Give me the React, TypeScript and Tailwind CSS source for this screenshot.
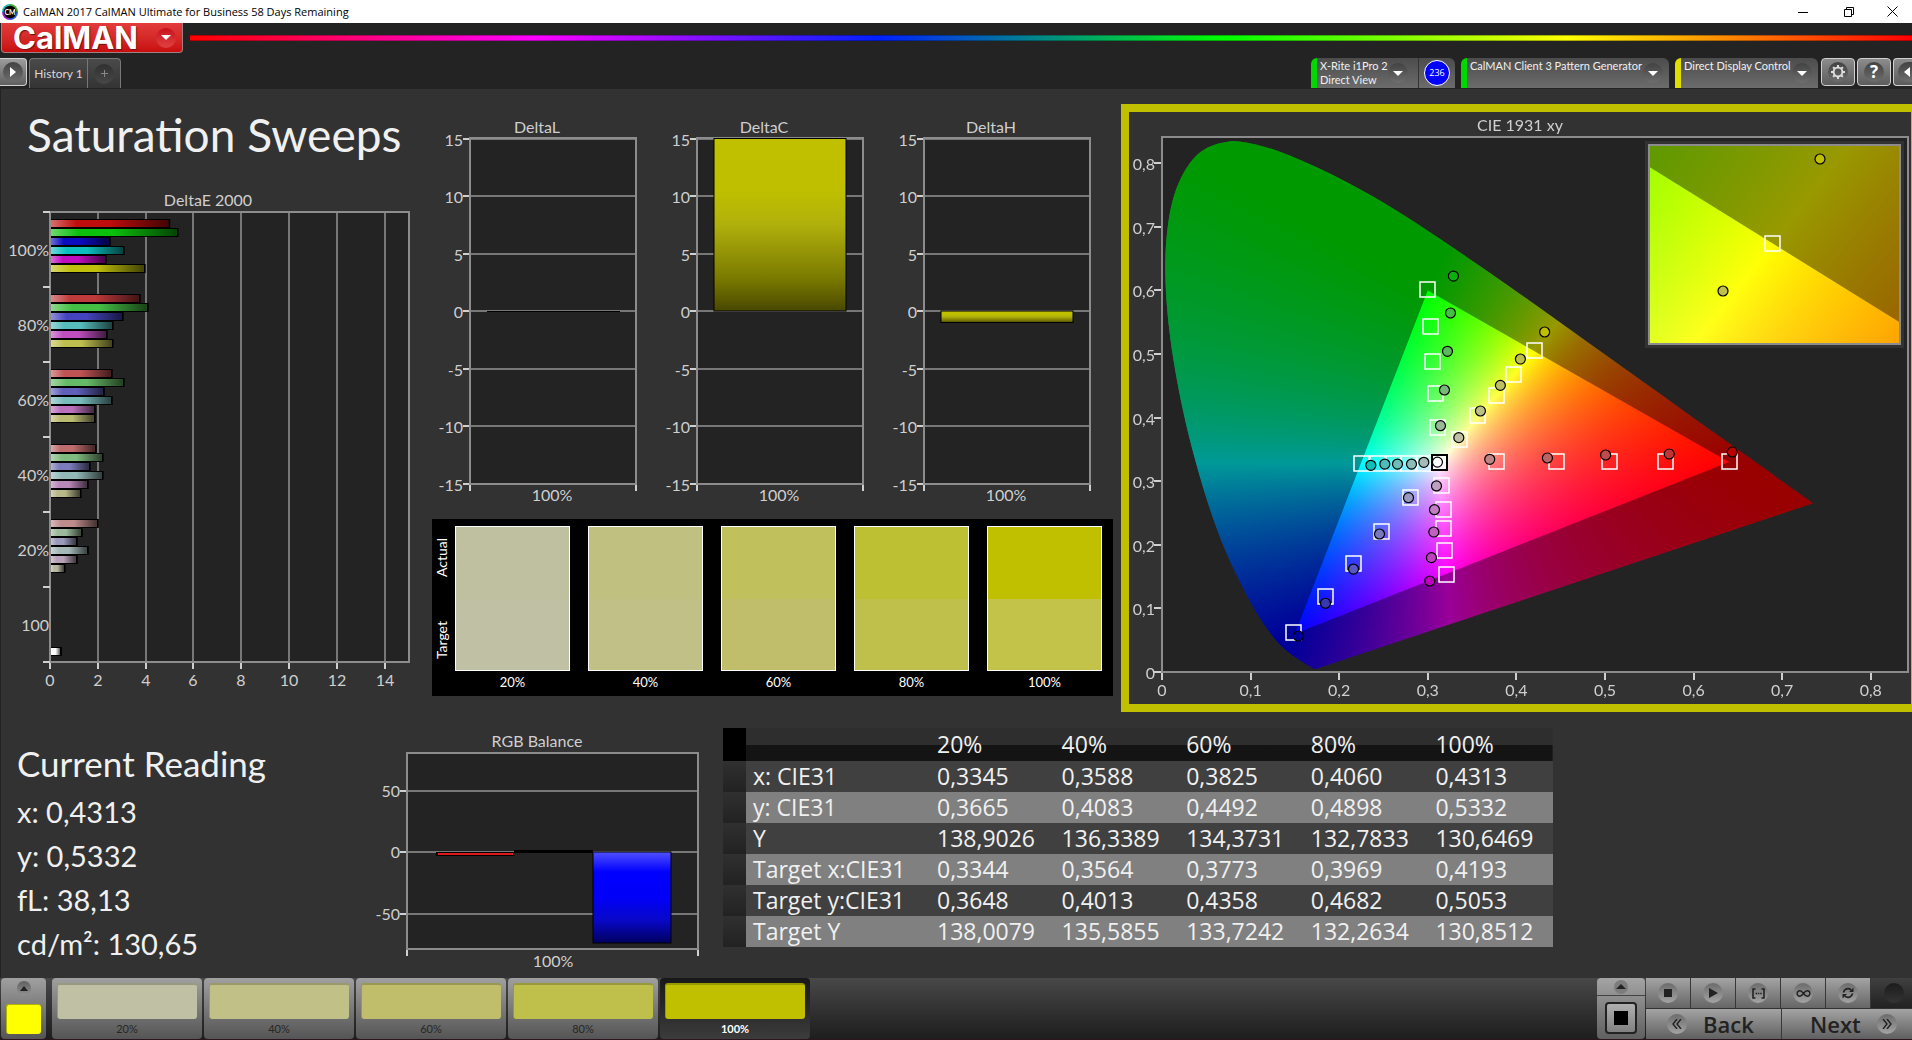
import React, { useEffect, useRef } from "react";

const GRID = "#8c8c8c";
const LABEL = "#cfcfcf";
const LEVELS = ["20%", "40%", "60%", "80%", "100%"];

/* ---------- data ---------- */

const deltaE = [
  {
    label: "100%",
    values: [4.99, 5.34, 2.5, 3.08, 2.33, 3.96],
    colors: ["#bf0c0c", "#0cbf0c", "#0c0cbf", "#0cbfbf", "#bf0cbf", "#bfbf0c"],
  },
  {
    label: "80%",
    values: [3.75, 4.09, 3.04, 2.62, 2.37, 2.62],
    colors: ["#bf3a3a", "#44bf44", "#4444bf", "#55bbbb", "#bf4fbf", "#bfbf50"],
  },
  {
    label: "60%",
    values: [2.58, 3.08, 2.25, 2.58, 1.87, 1.87],
    colors: ["#bf5353", "#66bb66", "#6060bb", "#77bbbb", "#bb70bb", "#bbbb70"],
  },
  {
    label: "40%",
    values: [1.91, 2.2, 1.66, 2.2, 1.58, 1.28],
    colors: ["#bf6c6c", "#80bb80", "#7c7cbb", "#92b8b8", "#b888b8", "#b8b888"],
  },
  {
    label: "20%",
    values: [2.0, 1.33, 1.12, 1.58, 1.12, 0.61],
    colors: ["#bf8c8c", "#9cbb9c", "#9a9abb", "#a5b8b8", "#b8a2b8", "#b8b8a2"],
  },
];

const swatches = [
  { label: "20%", actual: "#bfc09f", target: "#c0c0a4" },
  { label: "40%", actual: "#c0c080", target: "#c1c087" },
  { label: "60%", actual: "#c0c05c", target: "#c0be6a" },
  { label: "80%", actual: "#bec033", target: "#bfc04b" },
  { label: "100%", actual: "#c0c000", target: "#c3c34a" },
];

const steps = [
  { label: "20%", color: "#c0c0a4" },
  { label: "40%", color: "#c1c087" },
  { label: "60%", color: "#c0be6a" },
  { label: "80%", color: "#bfc04b" },
  { label: "100%", color: "#c0c000" },
];

const rows = [
  { name: "x: CIE31", values: ["0,3345", "0,3588", "0,3825", "0,4060", "0,4313"] },
  { name: "y: CIE31", values: ["0,3665", "0,4083", "0,4492", "0,4898", "0,5332"] },
  { name: "Y", values: ["138,9026", "136,3389", "134,3731", "132,7833", "130,6469"] },
  { name: "Target x:CIE31", values: ["0,3344", "0,3564", "0,3773", "0,3969", "0,4193"] },
  { name: "Target y:CIE31", values: ["0,3648", "0,4013", "0,4358", "0,4682", "0,5053"] },
  { name: "Target Y", values: ["138,0079", "135,5855", "133,7242", "132,2634", "130,8512"] },
];

type Point = [number, number];

// spectral locus, CIE 1931 2 degree observer
const locus: Point[] = [
  [0.1741, 0.005], [0.1714, 0.0051], [0.1644, 0.0109], [0.1566, 0.0177],
  [0.144, 0.0297], [0.1355, 0.0399], [0.1241, 0.0578], [0.1096, 0.0868],
  [0.0913, 0.1327], [0.0687, 0.2007], [0.0454, 0.295], [0.0235, 0.4127],
  [0.0082, 0.5384], [0.0039, 0.6548], [0.0139, 0.7502], [0.0389, 0.812],
  [0.0743, 0.8338], [0.1142, 0.8262], [0.1547, 0.8059], [0.1929, 0.7816],
  [0.2296, 0.7543], [0.2658, 0.7243], [0.3016, 0.6923], [0.3373, 0.6589],
  [0.3731, 0.6245], [0.4441, 0.5547], [0.5125, 0.4866], [0.5752, 0.4242],
  [0.627, 0.3725], [0.6658, 0.334], [0.6915, 0.3083], [0.719, 0.2809],
  [0.7347, 0.2653],
];

const gamut: Point[] = [[0.64, 0.33], [0.3, 0.6], [0.15, 0.06]];

const targets: Point[] = [
  [0.299, 0.602], [0.3026, 0.544], [0.3045, 0.4895], [0.3079, 0.438], [0.3101, 0.385],
  [0.4195, 0.506], [0.3962, 0.4686], [0.3767, 0.436], [0.3556, 0.404], [0.335, 0.366],
  [0.3767, 0.3318], [0.4443, 0.3318], [0.5041, 0.3318], [0.5673, 0.3318], [0.6398, 0.3318],
  [0.2244, 0.329], [0.2423, 0.329], [0.2603, 0.329], [0.2782, 0.329], [0.296, 0.329],
  [0.315, 0.294], [0.3169, 0.2568], [0.3169, 0.2264], [0.3184, 0.1918], [0.3203, 0.1541],
  [0.2797, 0.2752], [0.2477, 0.2217], [0.2161, 0.1709], [0.184, 0.12], [0.1482, 0.0622],
];

const measured: { at: Point; color: string }[] = [
  { at: [0.3289, 0.6226], color: "#0cb00c" },
  { at: [0.3256, 0.5645], color: "#44bf44" },
  { at: [0.3222, 0.5042], color: "#5cb85c" },
  { at: [0.3188, 0.4434], color: "#78b878" },
  { at: [0.3143, 0.3873], color: "#98b898" },
  { at: [0.4319, 0.5346], color: "#c0c000" },
  { at: [0.4045, 0.4921], color: "#bfbf4b" },
  { at: [0.3819, 0.4507], color: "#bfbf68" },
  { at: [0.3594, 0.4104], color: "#bfbf88" },
  { at: [0.335, 0.3685], color: "#bfbfa2" },
  { at: [0.3699, 0.3344], color: "#bf8484" },
  { at: [0.435, 0.3365], color: "#bf6464" },
  { at: [0.5007, 0.3412], color: "#bf4c4c" },
  { at: [0.5725, 0.3428], color: "#bf3434" },
  { at: [0.6436, 0.3459], color: "#c00000" },
  { at: [0.2357, 0.325], color: "#0cc0b8" },
  { at: [0.2515, 0.327], color: "#50bcb8" },
  { at: [0.2658, 0.327], color: "#70bcb8" },
  { at: [0.2816, 0.327], color: "#8cbcb8" },
  { at: [0.2955, 0.3297], color: "#a4bcb8" },
  { at: [0.3109, 0.33], color: "#ffffff" },
  { at: [0.3098, 0.2925], color: "#c0a0c0" },
  { at: [0.3075, 0.2552], color: "#c080c0" },
  { at: [0.3068, 0.2201], color: "#c060c0" },
  { at: [0.3041, 0.1798], color: "#c040c0" },
  { at: [0.3022, 0.1431], color: "#c000c0" },
  { at: [0.2782, 0.2741], color: "#9898c0" },
  { at: [0.2455, 0.217], color: "#7878c0" },
  { at: [0.2161, 0.1619], color: "#5858c0" },
  { at: [0.1845, 0.1081], color: "#3838b0" },
  { at: [0.154, 0.0566], color: "#0000a0" },
];

/* ---------- CIE diagram ---------- */

const CIE_W = 782;
const CIE_H = 592;
const cieX = (x: number) => 33 + x * 886;
const cieY = (y: number) => 560 - y * 636;

const INSET = { x: 520, y: 33, w: 251, h: 199 };
const insetX = (x: number) => 643 + (x - 0.4193) / 0.000258;
const insetY = (y: number) => 131 - (y - 0.5053) / 0.00033;

// brightest rgb for a chromaticity, negative parts cut off
function chromaToRgb(x: number, y: number) {
  const yy = Math.max(y, 0.0001);
  const X = x / yy;
  const Z = (1 - x - y) / yy;
  const r = Math.max(0, 3.2406 * X - 1.5372 - 0.4986 * Z);
  const g = Math.max(0, -0.9689 * X + 1.8758 + 0.0415 * Z);
  const b = Math.max(0, 0.0557 * X - 0.204 + 1.057 * Z);
  const m = Math.max(r, g, b) || 1;
  return [(r / m) * 255, (g / m) * 255, (b / m) * 255];
}

function shade(w: number, h: number, toX: (px: number) => number, toY: (py: number) => number) {
  const canvas = document.createElement("canvas");
  canvas.width = w;
  canvas.height = h;
  const ctx = canvas.getContext("2d")!;
  const image = ctx.createImageData(w, h);
  for (let py = 0; py < h; py++) {
    for (let px = 0; px < w; px++) {
      const [r, g, b] = chromaToRgb(toX(px), toY(py));
      const i = (py * w + px) * 4;
      image.data[i] = r;
      image.data[i + 1] = g;
      image.data[i + 2] = b;
      image.data[i + 3] = 255;
    }
  }
  ctx.putImageData(image, 0, 0);
  return canvas;
}

function trace(path: Path2D, points: Point[], toX: (x: number) => number, toY: (y: number) => number) {
  points.forEach(([x, y], i) => {
    if (i === 0) path.moveTo(toX(x), toY(y));
    else path.lineTo(toX(x), toY(y));
  });
  path.closePath();
}

// Catmull-Rom through the locus samples, closed by the purple line
function traceLocus(path: Path2D) {
  const pts = locus.map(([x, y]) => [cieX(x), cieY(y)]);
  path.moveTo(pts[0][0], pts[0][1]);
  for (let i = 0; i < pts.length - 1; i++) {
    const p0 = pts[Math.max(i - 1, 0)];
    const p1 = pts[i];
    const p2 = pts[i + 1];
    const p3 = pts[Math.min(i + 2, pts.length - 1)];
    path.bezierCurveTo(
      p1[0] + (p2[0] - p0[0]) / 6,
      p1[1] + (p2[1] - p0[1]) / 6,
      p2[0] - (p3[0] - p1[0]) / 6,
      p2[1] - (p3[1] - p1[1]) / 6,
      p2[0],
      p2[1],
    );
  }
  path.closePath();
}

function CieChart() {
  const ref = useRef<HTMLCanvasElement>(null);

  useEffect(() => {
    const ctx = ref.current?.getContext("2d");
    if (!ctx) return;
    ctx.clearRect(0, 0, CIE_W, CIE_H);
    ctx.fillStyle = "#232323";
    ctx.fillRect(33, 25, 746, 535);

    // horseshoe, darker outside of the gamut triangle
    const shoe = new Path2D();
    traceLocus(shoe);
    ctx.save();
    ctx.clip(shoe);
    ctx.drawImage(
      shade(CIE_W, CIE_H, (px) => (px - 33) / 886, (py) => (560 - py) / 636),
      0,
      0,
    );
    const dim = new Path2D();
    dim.rect(0, 0, CIE_W, CIE_H);
    trace(dim, gamut, cieX, cieY);
    ctx.fillStyle = "rgba(0,0,0,0.4)";
    ctx.fill(dim, "evenodd");
    ctx.restore();

    // magnified target
    ctx.fillStyle = "#323232";
    ctx.fillRect(INSET.x - 4, INSET.y - 4, INSET.w + 8, INSET.h + 8);
    ctx.save();
    ctx.beginPath();
    ctx.rect(INSET.x, INSET.y, INSET.w, INSET.h);
    ctx.clip();
    ctx.drawImage(
      shade(
        INSET.w,
        INSET.h,
        (px) => 0.4193 + (px + INSET.x - 643) * 0.000258,
        (py) => 0.5053 - (py + INSET.y - 131) * 0.00033,
      ),
      INSET.x,
      INSET.y,
    );
    const dimInset = new Path2D();
    dimInset.rect(INSET.x, INSET.y, INSET.w, INSET.h);
    const inner = new Path2D();
    trace(inner, gamut, insetX, insetY);
    dimInset.addPath(inner);
    ctx.fillStyle = "rgba(0,0,0,0.4)";
    ctx.fill(dimInset, "evenodd");
    ctx.restore();
  }, []);

  const ticks = [0, 1, 2, 3, 4, 5, 6, 7, 8];
  const tickLabel = (n: number) => (n === 0 ? "0" : `0,${n}`);

  return (
    <div className="grid">
      <canvas ref={ref} width={CIE_W} height={CIE_H} className="col-start-1 row-start-1 w-full" />
      <svg
        viewBox={`0 0 ${CIE_W} ${CIE_H}`}
        className="col-start-1 row-start-1 w-full"
        fontSize="16"
        fill={LABEL}
        role="img"
        aria-label="CIE 1931 xy"
      >
        <text x="391" y="19" textAnchor="middle">CIE 1931 xy</text>
        <rect x="33" y="25" width="746" height="535" fill="none" stroke={GRID} strokeWidth="2" />
        {ticks.map((n) => (
          <g key={n}>
            <path
              d={`M${Math.round(cieX(n / 10))} 561v7M32 ${Math.round(cieY(n / 10))}h-7`}
              stroke={LABEL}
              strokeWidth="2"
            />
            <text x={cieX(n / 10)} y="584" textAnchor="middle">{tickLabel(n)}</text>
            <text x="26" y={cieY(n / 10) + 7} textAnchor="end">{tickLabel(n)}</text>
          </g>
        ))}
        {targets.map(([x, y], i) => (
          <rect
            key={i}
            x={Math.round(cieX(x)) - 7}
            y={Math.round(cieY(y)) - 7}
            width="15"
            height="15"
            fill="none"
            stroke="#fff"
            strokeWidth="1.5"
          />
        ))}
        <rect x="303" y="343" width="15" height="15" fill="#fff" fillOpacity="0.6" stroke="#000" strokeWidth="2" />
        {measured.map(({ at, color }, i) => (
          <circle key={i} cx={cieX(at[0])} cy={cieY(at[1])} r="5" fill={color} stroke="#000" strokeWidth="1.2" />
        ))}
        <rect x={INSET.x} y={INSET.y} width={INSET.w} height={INSET.h} fill="none" stroke={GRID} strokeWidth="2" />
        <rect x="636" y="124" width="15" height="15" fill="none" stroke="#fff" strokeWidth="1.5" />
        <circle cx="691" cy="47" r="5" fill="#c0c000" stroke="#000" strokeWidth="1.2" />
        <circle cx="594" cy="179" r="5" fill="#bfbf4b" stroke="#000" strokeWidth="1.2" />
      </svg>
    </div>
  );
}

/* ---------- bar charts ---------- */

function DeltaEChart() {
  const scale = 23.9;
  const top = 25;
  return (
    <svg viewBox="0 0 432 510" className="w-full" fontSize="16" fill={LABEL} role="img" aria-label="DeltaE 2000">
      <defs>
        <linearGradient id="gloss" x1="0" x2="1" y1="0" y2="0">
          <stop offset="0" stopColor="#fff" stopOpacity="0.4" />
          <stop offset="0.22" stopColor="#fff" stopOpacity="0" />
          <stop offset="0.5" stopColor="#000" stopOpacity="0" />
          <stop offset="1" stopColor="#000" stopOpacity="0.65" />
        </linearGradient>
      </defs>
      <text x="208" y="19" textAnchor="middle">DeltaE 2000</text>
      <rect x="50" y={top} width="359" height="450" fill="#232323" />
      {[0, 2, 4, 6, 8, 10, 12, 14].map((n) => {
        const x = Math.round(50 + n * scale);
        return (
          <g key={n}>
            <path d={`M${x} ${top}V475`} stroke="#777" strokeWidth="2" />
            <path d={`M${x} 476v6`} stroke={LABEL} strokeWidth="2" />
            <text x={x} y="499" textAnchor="middle">{n}</text>
          </g>
        );
      })}
      <rect x="50" y={top} width="359" height="450" fill="none" stroke={GRID} strokeWidth="2" />
      {[0, 1, 2, 3, 4, 5, 6].map((n) => (
        <path key={n} d={`M43 ${top + n * 75}h7`} stroke={LABEL} strokeWidth="2" />
      ))}
      {deltaE.map((group, gi) => (
        <g key={group.label}>
          <text x="49" y={top + 44 + gi * 75} textAnchor="end">{group.label}</text>
          {group.values.map((value, i) => {
            const y = top + 7 + gi * 75 + i * 9;
            return (
              <g key={i}>
                <rect x="51" y={y} width={value * scale} height="9" fill="#000" />
                <rect x="51" y={y + 1} width={value * scale - 2} height="7" fill={group.colors[i]} />
                <rect x="51" y={y + 1} width={value * scale - 2} height="7" fill="url(#gloss)" />
              </g>
            );
          })}
        </g>
      ))}
      <text x="49" y={top + 419} textAnchor="end">100</text>
      <rect x="51" y="460" width="11" height="9" fill="#000" />
      <rect x="51" y="461" width="9" height="7" fill="#fff" />
      <rect x="51" y="461" width="9" height="7" fill="url(#gloss)" />
    </svg>
  );
}

function DeltaChart({ title, value }: { title: string; value: number }) {
  const zero = 196;
  const unit = 11.5;
  const clipped = Math.min(value, 15);
  const h = Math.abs(clipped) * unit;
  const y = clipped > 0 ? zero - h : zero;
  return (
    <svg viewBox="0 0 227 395" className="w-full" fontSize="16" fill={LABEL} role="img" aria-label={title}>
      <defs>
        <linearGradient id={`fill-${title}`} x1="0" x2="0" y1="0" y2="1">
          <stop offset="0" stopColor="#c0c000" />
          <stop offset="0.3" stopColor="#bfbf00" />
          <stop offset="0.5" stopColor="#b0b00c" />
          <stop offset="0.82" stopColor="#787800" />
          <stop offset="1" stopColor="#484800" />
        </linearGradient>
      </defs>
      <text x="105" y="18" textAnchor="middle">{title}</text>
      <rect x="38" y="23" width="166" height="346" fill="#232323" />
      {[15, 10, 5, 0, -5, -10, -15].map((n) => {
        const gy = Math.round(zero - n * unit);
        return (
          <g key={n}>
            <path d={`M38 ${gy}h166`} stroke="#777" strokeWidth="2" />
            <path d={`M31 ${gy}h6`} stroke={LABEL} strokeWidth="2" />
            <text x="31" y={gy + 7} textAnchor="end">{n}</text>
          </g>
        );
      })}
      <rect x="38" y="23" width="166" height="346" fill="none" stroke={GRID} strokeWidth="2" />
      {h < 1 ? (
        <rect x="55" y={zero} width="133" height="1" fill="#000" />
      ) : (
        <rect x="55" y={y} width="132" height={h} fill={`url(#fill-${title})`} stroke="#000" />
      )}
      <path d="M38 370v6M204 370v6" stroke={LABEL} strokeWidth="2" />
      <text x="120" y="386" textAnchor="middle">100%</text>
    </svg>
  );
}

function RgbBalance() {
  return (
    <svg viewBox="0 0 343 245" className="w-full overflow-visible" fontSize="16" fill={LABEL} role="img" aria-label="RGB Balance">
      <defs>
        <linearGradient id="blue" x1="0" x2="0" y1="0" y2="1">
          <stop offset="0" stopColor="#5050ff" />
          <stop offset="0.22" stopColor="#0000ff" />
          <stop offset="0.5" stopColor="#0000f8" />
          <stop offset="0.75" stopColor="#0808c8" />
          <stop offset="1" stopColor="#000060" />
        </linearGradient>
      </defs>
      <text x="157" y="19" textAnchor="middle">RGB Balance</text>
      <rect x="27" y="25" width="291" height="196" fill="#232323" />
      {[50, 0, -50].map((n) => {
        const y = Math.round(124 - n * 1.23);
        return (
          <g key={n}>
            <path d={`M27 ${y}h291`} stroke="#777" strokeWidth="2" />
            <path d={`M20 ${y}h6`} stroke={LABEL} strokeWidth="2" />
            <text x="20" y={y + 6} textAnchor="end">{n}</text>
          </g>
        );
      })}
      <rect x="27" y="25" width="291" height="196" fill="none" stroke={GRID} strokeWidth="2" />
      <rect x="56" y="124" width="78" height="4" fill="#000" />
      <rect x="58" y="125" width="75" height="2" fill="#e01818" />
      <rect x="134" y="122" width="79" height="3" fill="#000" />
      <rect x="213" y="124" width="78" height="91" fill="url(#blue)" stroke="#000" />
      <path d="M27 222v6M318 222v6" stroke={LABEL} strokeWidth="2" />
      <text x="173" y="239" textAnchor="middle">100%</text>
    </svg>
  );
}

/* ---------- chrome ---------- */

function TitleBar() {
  return (
    <header className="flex h-[23px] items-center bg-white text-black">
      <svg viewBox="0 0 16 16" className="ml-[2px] size-4" aria-hidden="true">
        <path d="M8 0A8 8 0 0 1 16 8H8z" fill="#3fae2a" />
        <path d="M16 8A8 8 0 0 1 8 16V8z" fill="#2a5bd7" />
        <path d="M8 16A8 8 0 0 1 0 8H8z" fill="#a21fc4" />
        <path d="M0 8A8 8 0 0 1 8 0V8z" fill="#18b7b0" />
        <circle cx="8" cy="8" r="6.3" fill="#000" />
        <text x="8" y="10.6" fontSize="7" fontWeight="700" textAnchor="middle" fill="#fff">CM</text>
      </svg>
      <span className="ml-[5px] font-['Open_Sans',sans-serif] text-[11px] leading-4">
        CalMAN 2017 CalMAN Ultimate for Business 58 Days Remaining
      </span>
      <div className="ml-auto flex">
        <button type="button" aria-label="Minimize" className="flex h-[23px] w-[46px] items-center justify-center">
          <svg viewBox="0 0 10 10" className="size-[10px]"><path d="M0 5.5h10" stroke="#000" /></svg>
        </button>
        <button type="button" aria-label="Restore" className="flex h-[23px] w-[46px] items-center justify-center">
          <svg viewBox="0 0 10 10" className="size-[10px]" fill="none" stroke="#000">
            <path d="M.5 2.5h7v7h-7zM2.5 2.5v-2h7v7h-2" />
          </svg>
        </button>
        <button type="button" aria-label="Close" className="flex h-[23px] w-[40px] items-center justify-center">
          <svg viewBox="0 0 11 11" className="size-[11px]" stroke="#000"><path d="M.5 .5l10 10M10.5 .5l-10 10" /></svg>
        </button>
      </div>
    </header>
  );
}

const Knob = ({ children }: { children: React.ReactNode }) => (
  <span className="flex size-5 shrink-0 items-center justify-center rounded-full bg-linear-to-b from-[#424242] to-[#6e6e6e]">
    {children}
  </span>
);

const Down = () => (
  <svg viewBox="0 0 10 5" className="h-[5px] w-[10px]" fill="#fff"><path d="M0 0h10L5 5z" /></svg>
);

function DeviceTab({ lines, className }: { lines: string[]; className: string }) {
  return (
    <button
      type="button"
      aria-haspopup="menu"
      className={`flex h-[30px] items-start justify-between overflow-hidden border-l-[6px] bg-linear-to-b from-[#4c4c4c] to-[#6c6c6c] pl-[3px] text-left ${className}`}
    >
      <span className="pt-[1px] text-[11px] leading-[14px] whitespace-nowrap text-[#f0f0f0]">
        {lines.map((line) => (
          <span key={line} className="block">{line}</span>
        ))}
      </span>
      <span className="mt-[5px] mr-[6px]">
        <Knob><Down /></Knob>
      </span>
    </button>
  );
}

function SquareButton({ label, className = "", children }: { label: string; className?: string; children: React.ReactNode }) {
  return (
    <button
      type="button"
      aria-label={label}
      className={`flex h-[28px] items-center justify-center rounded border border-[#d0d0d0] bg-linear-to-b from-[#8c8c8c] to-[#5c5c5c] ${className}`}
    >
      <Knob>{children}</Knob>
    </button>
  );
}

function Toolbar() {
  return (
    <div className="bg-[#232323]">
      <div className="flex h-[35px] items-start">
        <button
          type="button"
          aria-haspopup="menu"
          aria-label="CalMAN menu"
          className="ml-px flex h-[30px] w-[182px] items-center justify-between rounded-b border border-t-0 border-[#a08080] bg-linear-to-b from-[#e23c3c] to-[#c80c0c] pr-[6px] pl-[11px]"
        >
          <span className="font-[Inter,sans-serif] text-[31px] leading-[28px] font-bold text-white [text-shadow:1px_1px_1px_#701010]">
            CalMAN
          </span>
          <span className="flex size-5 items-center justify-center rounded-full bg-linear-to-b from-[#c80c1c] to-[#e04040]">
            <Down />
          </span>
        </button>
        <div className="mt-[12px] ml-[7px] h-[6px] flex-1 border-y border-black/30 bg-[linear-gradient(to_right,#f00,#f0f_20%,#0020ff_40%,#0f0_60%,#ff0_80%,#f00)]" />
      </div>
      <div className="flex h-[31px] items-start">
        <button
          type="button"
          aria-label="Show workflow"
          className="flex h-[28px] w-[27px] items-center justify-center rounded-r border border-l-0 border-[#d0d0d0] bg-linear-to-b from-[#9c9c9c] to-[#606060]"
        >
          <Knob>
            <svg viewBox="0 0 6 10" className="h-[10px] w-[6px]" fill="#fff"><path d="M0 0l6 5-6 5z" /></svg>
          </Knob>
        </button>
        <div className="ml-[2px] flex h-[30px] overflow-hidden rounded-t border border-b-0 border-[#777] bg-linear-to-b from-[#4a4a4a] to-[#343434]">
          <button type="button" className="w-[57px] text-[12px] text-[#d8d8d8]">History 1</button>
          <button type="button" aria-label="Add history" className="flex w-[33px] items-center justify-center border-l border-[#777]">
            <span className="flex size-5 items-center justify-center rounded-full bg-linear-to-b from-[#303030] to-[#484848]">
              <svg viewBox="0 0 7 7" className="size-[7px]" stroke="#888"><path d="M3.5 0v7M0 3.5h7" /></svg>
            </span>
          </button>
        </div>
        <div className="ml-auto flex items-start">
          <div className="mr-[6px] flex overflow-hidden rounded-t-md">
            <DeviceTab lines={["X-Rite i1Pro 2", "Direct View"]} className="w-[107px] border-l-[#00d800] pr-1" />
            <div className="flex w-[37px] items-center justify-center border-l border-[#333] bg-linear-to-b from-[#4c4c4c] to-[#6c6c6c]">
              <span className="flex size-[26px] shrink-0 items-center justify-center rounded-full border border-white bg-[#0000ff] font-['Open_Sans',sans-serif] text-[9px] text-white">
                236
              </span>
            </div>
          </div>
          <DeviceTab lines={["CalMAN Client 3 Pattern Generator"]} className="mr-[6px] w-[208px] rounded-t-md border-l-[#00d800]" />
          <DeviceTab lines={["Direct Display Control"]} className="mr-[3px] w-[143px] rounded-t-md border-l-[#e0e000]" />
          <SquareButton label="Settings" className="mr-[2px] w-[34px]">
            <svg viewBox="0 0 16 16" className="size-4" fill="none" stroke="#ddd" strokeWidth="2">
              <circle cx="8" cy="8" r="4.4" />
              <path d="M8 1v2M8 13v2M1 8h2M13 8h2M3.1 3.1l1.4 1.4M11.5 11.5l1.4 1.4M12.9 3.1l-1.4 1.4M4.5 11.5l-1.4 1.4" />
            </svg>
          </SquareButton>
          <SquareButton label="Help" className="mr-[2px] w-[34px]">
            <span className="font-['Open_Sans',sans-serif] text-[17px] leading-5 font-bold text-white">?</span>
          </SquareButton>
          <button
            type="button"
            aria-label="Show panel"
            className="flex h-[28px] w-[19px] items-center justify-end rounded-l border border-r-0 border-[#d0d0d0] bg-linear-to-b from-[#8c8c8c] to-[#5c5c5c]"
          >
            <span className="flex h-5 w-[14px] items-center justify-end rounded-l-full bg-linear-to-b from-[#424242] to-[#6e6e6e] pr-[2px]">
              <svg viewBox="0 0 6 10" className="h-[10px] w-[6px]" fill="#fff"><path d="M6 0L0 5l6 5z" /></svg>
            </span>
          </button>
        </div>
      </div>
    </div>
  );
}

function ColorPanel() {
  return (
    <div className="mt-[9px] flex bg-black py-[7px] pr-[11px] text-[13px] text-white">
      <div className="mr-[3px] flex h-[145px] w-5 flex-col items-center justify-between py-[12px] text-[14px] leading-5">
        <span className="rotate-180 [writing-mode:vertical-rl]">Actual</span>
        <span className="rotate-180 [writing-mode:vertical-rl]">Target</span>
      </div>
      <div className="grid flex-1 grid-cols-5 gap-[18px]">
        {swatches.map((s) => (
          <figure key={s.label}>
            <div className="flex h-[145px] flex-col border border-white">
              <div className="flex-1" style={{ backgroundColor: s.actual }} />
              <div className="flex-1" style={{ backgroundColor: s.target }} />
            </div>
            <figcaption className="pt-1 text-center leading-[14px]">{s.label}</figcaption>
          </figure>
        ))}
      </div>
    </div>
  );
}

function ResultTable() {
  return (
    <table className="w-full table-fixed border-collapse text-left font-['Open_Sans',sans-serif] text-[23px] leading-[31px] text-[#f0f0f0]">
      <colgroup>
        <col className="w-[23px]" />
        <col className="w-[184px]" />
        {LEVELS.map((l) => <col key={l} />)}
      </colgroup>
      <thead>
        <tr className="h-[33px] bg-linear-to-b from-[#2e2e2e] from-50% to-[#141414] to-50%">
          <td className="bg-black p-0" />
          <td className="p-0" />
          {LEVELS.map((l) => (
            <th key={l} scope="col" className="p-0 pl-[7px] font-normal">{l}</th>
          ))}
        </tr>
      </thead>
      <tbody>
        {rows.map((row) => (
          <tr key={row.name} className="h-[31px] odd:bg-[#404040] even:bg-[#808080]">
            <td className="bg-linear-to-b from-[#303030] to-[#222] p-0" />
            <th scope="row" className="p-0 pl-[7px] font-normal whitespace-nowrap">{row.name}</th>
            {row.values.map((v, i) => (
              <td key={i} className="p-0 pl-[7px]">{v}</td>
            ))}
          </tr>
        ))}
      </tbody>
    </table>
  );
}

const RoundIcon = ({ children }: { children: React.ReactNode }) => (
  <span className="flex size-5 shrink-0 items-center justify-center rounded-full bg-linear-to-b from-[#6c6c6c] to-[#a4a4a4]">
    {children}
  </span>
);

const control =
  "flex h-[30px] w-[45px] items-center justify-center border-r border-[#383838] bg-linear-to-b from-[#a4a4a4] to-[#666]";

function BottomBar() {
  return (
    <footer className="flex h-[62px] items-start border-b border-[#2c1420] bg-linear-to-b from-[#484848] to-[#1e1e1e]">
      <div className="mr-[6px] ml-px flex h-[61px] w-[45px] flex-col items-center rounded bg-linear-to-b from-[#a0a0a0] to-[#555] pt-[3px]">
        <button
          type="button"
          aria-label="Expand"
          className="mb-[9px] flex size-[14px] items-center justify-center rounded-full bg-linear-to-b from-[#606060] to-[#909090]"
        >
          <svg viewBox="0 0 8 5" className="h-[5px] w-2" fill="#222"><path d="M4 0l4 5H0z" /></svg>
        </button>
        <span className="h-[30px] w-[35px] rounded-[3px] border-t border-l border-[#b0b000] bg-[#ffff00]" />
      </div>
      <div className="flex gap-[2px]">
        {steps.map((s, i) => {
          const active = i === steps.length - 1;
          return (
            <button
              key={s.label}
              type="button"
              aria-pressed={active}
              className={
                active
                  ? "h-[61px] w-[150px] rounded bg-linear-to-b from-[#181818] to-[#3c3c3c] px-[5px] pt-[5px] text-[11px] leading-5 font-bold text-white"
                  : "h-[61px] w-[150px] rounded bg-linear-to-b from-[#a0a0a0] to-[#555] px-[5px] pt-[5px] text-[11px] leading-5 text-[#262626]"
              }
            >
              <span
                className="block h-[36px] rounded-[3px] border-t-2 border-l border-black/20"
                style={{ backgroundColor: s.color }}
              />
              {s.label}
            </button>
          );
        })}
      </div>
      <div className="ml-auto flex w-[315px] shrink-0 overflow-hidden">
        <div className="mr-px flex h-[61px] w-[48px] shrink-0 flex-col rounded bg-linear-to-b from-[#a4a4a4] to-[#606060]">
          <button type="button" aria-label="Expand controls" className="flex h-[18px] items-center justify-center border-b border-[#444]">
            <span className="flex size-[14px] items-center justify-center rounded-full bg-[#7c7c7c]">
              <svg viewBox="0 0 10 5" className="h-[5px] w-[10px]" fill="#222"><path d="M5 0l5 5H0z" /></svg>
            </span>
          </button>
          <button type="button" aria-label="Pattern window" className="mx-auto mt-[6px] flex size-8 items-center justify-center rounded border-2 border-[#222] bg-linear-to-b from-[#b0b0b0] to-[#808080]">
            <span className="size-[14px] bg-black" />
          </button>
        </div>
        <div className="shrink-0">
          <div className="flex">
            <button type="button" aria-label="Stop" className={control}>
              <RoundIcon><span className="size-2 bg-[#222]" /></RoundIcon>
            </button>
            <button type="button" aria-label="Play" className={control}>
              <RoundIcon>
                <svg viewBox="0 0 9 10" className="h-[10px] w-[9px]" fill="#222"><path d="M0 0l9 5-9 5z" /></svg>
              </RoundIcon>
            </button>
            <button type="button" aria-label="Read series" className={control}>
              <RoundIcon>
                <svg viewBox="0 0 13 11" className="h-[11px] w-[13px]" fill="none" stroke="#222" strokeWidth="1.6">
                  <path d="M3.5 1H1v9h2.500M9.500 1H12v9H9.500M3.500 5.500h1.500M5.800 5.500h1.500M8.200 5.500h1.500" />
                </svg>
              </RoundIcon>
            </button>
            <button type="button" aria-label="Read continuous" className={control}>
              <RoundIcon>
                <svg viewBox="0 0 15 7" className="h-[7px] w-[15px]" fill="none" stroke="#222" strokeWidth="1.4">
                  <path d="M7.500 3.500C6 1.500 5 .8 3.800 .8a2.700 2.700 0 0 0 0 5.400C5 6.200 6 5.500 7.500 3.500S10 .8 11.200 .8a2.700 2.700 0 0 1 0 5.400C10 6.200 9 5.500 7.500 3.500z" />
                </svg>
              </RoundIcon>
            </button>
            <button type="button" aria-label="Refresh" className={control}>
              <RoundIcon>
                <svg viewBox="0 0 12 12" className="size-3" fill="none" stroke="#222" strokeWidth="1.8">
                  <path d="M1.500 5.500A4.500 4.500 0 0 1 9 2.800M10.500 6.500A4.500 4.500 0 0 1 3 9.200" />
                  <path d="M11.500 .5v4.500H7zM.5 11.500V7H5z" fill="#222" stroke="none" />
                </svg>
              </RoundIcon>
            </button>
            <span className="flex h-[30px] w-[45px] items-center justify-center bg-linear-to-b from-[#404040] to-[#222]">
              <span className="size-5 rounded-full bg-linear-to-b from-[#1c1c1c] to-[#343434]" />
            </span>
          </div>
          <div className="mt-px flex font-['Open_Sans',sans-serif] text-[22px] leading-[30px] font-semibold text-[#222]">
            <button type="button" className="flex h-[30px] w-[136px] items-center gap-4 border-r border-[#383838] bg-linear-to-b from-[#a4a4a4] to-[#606060] pl-[21px]">
              <RoundIcon>
                <svg viewBox="0 0 10 10" className="size-[10px]" fill="none" stroke="#222" strokeWidth="1.4">
                  <path d="M5 0L1 5l4 5M9 0L5 5l4 5" />
                </svg>
              </RoundIcon>
              Back
            </button>
            <button type="button" className="flex h-[30px] w-[136px] items-center gap-4 bg-linear-to-b from-[#a4a4a4] to-[#606060] pl-[28px]">
              Next
              <RoundIcon>
                <svg viewBox="0 0 10 10" className="size-[10px]" fill="none" stroke="#222" strokeWidth="1.4">
                  <path d="M1 0l4 5-4 5M5 0l4 5-4 5" />
                </svg>
              </RoundIcon>
            </button>
          </div>
        </div>
      </div>
    </footer>
  );
}

export default function App() {
  return (
    <div className="flex min-h-screen flex-col overflow-hidden bg-[#323232] font-[Lato,'Open_Sans',sans-serif] text-[#f0f0f0]">
      <TitleBar />
      <Toolbar />
      <main className="flex-1 border-l border-[#232323]">
        <section className="-ml-px grid grid-cols-[432fr_681fr_799fr] items-start">
          <div>
            <h1 className="pt-4 pl-[27px] text-[46px] leading-[60px] whitespace-nowrap">Saturation Sweeps</h1>
            <div className="mt-[22px]">
              <DeltaEChart />
            </div>
          </div>
          <div className="pt-[26px]">
            <div className="grid grid-cols-3">
              <DeltaChart title="DeltaL" value={0.02} />
              <DeltaChart title="DeltaC" value={16} />
              <DeltaChart title="DeltaH" value={-1} />
            </div>
            <ColorPanel />
          </div>
          <div className="pt-[15px] pl-2">
            <div className="border-8 border-r border-[#c0c000]">
              <CieChart />
            </div>
          </div>
        </section>
        <section className="-ml-px grid grid-cols-[380fr_343fr_830fr_359fr] items-start pt-4">
          <div className="pl-[17px] whitespace-nowrap">
            <h2 className="pt-[14px] text-[35px] leading-[42px]">Current Reading</h2>
            <div className="mt-[6px] text-[29px] leading-[44px]">
              <p>x: 0,4313</p>
              <p>y: 0,5332</p>
              <p>fL: 38,13</p>
              <p>cd/m²: 130,65</p>
            </div>
          </div>
          <RgbBalance />
          <ResultTable />
        </section>
      </main>
      <BottomBar />
    </div>
  );
}
